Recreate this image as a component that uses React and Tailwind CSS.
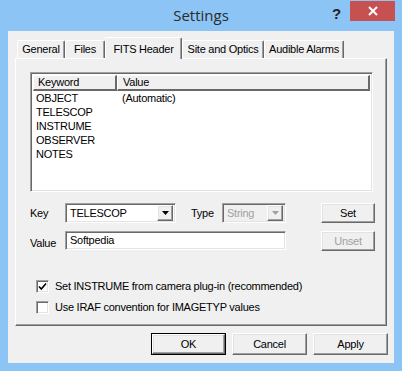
import React from "react";

const raised =
  "border border-t-white border-l-white border-r-[#696969] border-b-[#696969] shadow-[inset_-1px_-1px_0_#a0a0a0,inset_1px_1px_0_#e3e3e3]";
const sunken =
  "border border-t-[#a0a0a0] border-l-[#a0a0a0] border-r-white border-b-white shadow-[inset_1px_1px_0_#696969,inset_-1px_-1px_0_#e3e3e3]";

function Arrow({ color }) {
  return (
    <svg width="7" height="4" viewBox="0 0 7 4">
      <path d="M0 0H7L3.5 4Z" fill={color} />
    </svg>
  );
}

function Button({ children, disabled, def, className = "" }) {
  if (def) {
    return (
      <div className={"border border-black bg-[#f0f0f0] flex " + className}>
        <div className={"flex-1 flex items-center justify-center " + raised}>{children}</div>
      </div>
    );
  }
  return (
    <div
      className={
        "bg-[#f0f0f0] flex items-center justify-center " +
        raised +
        " " +
        (disabled ? "text-[#a0a0a0] " : "") +
        className
      }
    >
      {children}
    </div>
  );
}

function Checkbox({ checked, label }) {
  return (
    <div className="flex items-center h-[13px] ml-[6px]">
      <div className={"w-[13px] h-[13px] bg-white flex items-center justify-center " + sunken}>
        {checked && (
          <svg width="9" height="9" viewBox="0 0 9 9">
            <path d="M1 4.5L3.3 7L8 1.5" stroke="#000" strokeWidth="1.6" fill="none" />
          </svg>
        )}
      </div>
      <span className="ml-[6px] leading-[13px] whitespace-nowrap">{label}</span>
    </div>
  );
}

function Tab({ label, selected, w, className = "" }) {
  if (selected) {
    return (
      <div
        className={
          "relative z-10 shrink-0 h-[22px] -mb-px bg-[#f0f0f0] border-t border-l border-r border-t-white border-l-white border-r-[#696969] shadow-[inset_-1px_0_0_#a0a0a0] rounded-t-[2px] flex items-start justify-center pt-[3px] whitespace-nowrap overflow-hidden " +
          className
        }
        style={{ width: w }}
      >
        {label}
      </div>
    );
  }
  return (
    <div
      className={
        "shrink-0 h-[18px] bg-[#f0f0f0] border-t border-l border-r border-t-white border-l-white border-r-[#696969] shadow-[inset_-1px_0_0_#a0a0a0] rounded-t-[2px] flex items-center justify-center whitespace-nowrap overflow-hidden " +
        className
      }
      style={{ width: w }}
    >
      {label}
    </div>
  );
}

export default function App() {
  const rows = [
    ["OBJECT", "(Automatic)"],
    ["TELESCOP", ""],
    ["INSTRUME", ""],
    ["OBSERVER", ""],
    ["NOTES", ""],
  ];
  return (
    <div className="w-[402px] h-[371px] bg-[#8cc4f5] flex flex-col font-['Liberation_Sans',Arial,sans-serif] text-[11px] tracking-[-0.25px] text-black overflow-hidden">
      {/* Title bar */}
      <div className="relative h-[31px] shrink-0 flex items-center justify-center tracking-normal">
        <span className="font-['Open_Sans',sans-serif] text-[15px] text-[#2b2b2b] -mt-[1px]">Settings</span>
        <span className="absolute left-[332px] top-[3px] font-['Liberation_Sans',sans-serif] font-bold text-[15px] text-[#222]">
          ?
        </span>
        <div className="absolute left-[350px] top-[1px] w-[45px] h-[20px] bg-[#c75050] flex items-center justify-center">
          <svg width="10" height="10" viewBox="0 0 10 10">
            <path d="M1 1L9 9M9 1L1 9" stroke="#fff" strokeWidth="2" />
          </svg>
        </div>
      </div>

      {/* Client area */}
      <div className="mx-[8px] w-[386px] h-[332px] bg-[#f0f0f0] flex flex-col pt-[6px]">
        {/* Tabs */}
        <div className="flex items-end h-[21px] pl-[9px]">
          <Tab label="General" w={48} />
          <Tab label="Files" w={40} />
          <Tab label="FITS Header" w={77} selected />
          <Tab label="Site and Optics" w={82} />
          <Tab label="Audible Alarms" w={80} />
        </div>

        {/* Panel */}
        <div className="ml-[7px] w-[372px] h-[268px] border border-t-white border-l-white border-r-[#696969] border-b-[#696969] shadow-[inset_-1px_-1px_0_#a0a0a0] pl-[14px] pt-[13px] flex flex-col">
          {/* List view */}
          <div className={"w-[343px] h-[120px] bg-white flex flex-col p-[2px] " + sunken}>
            <div className="flex h-[16px] shrink-0">
              <div className="w-[84px] h-[16px] bg-[#f0f0f0] border-t border-l border-t-white border-l-white border-r-2 border-b-2 border-r-[#696969] border-b-[#696969] pl-[4px] flex items-center leading-none">
                Keyword
              </div>
              <div className="flex-1 h-[16px] bg-[#f0f0f0] border-t border-l border-t-white border-l-white border-r-2 border-b-2 border-r-[#696969] border-b-[#696969] pl-[5px] flex items-center leading-none">
                Value
              </div>
            </div>
            <div className="flex flex-col">
              {rows.map(([k, v]) => (
                <div key={k} className="flex h-[14px] items-center leading-[14px]">
                  <span className="w-[89px] pl-[3px] shrink-0 text-[#000]">{k}</span>
                  <span>{v}</span>
                </div>
              ))}
            </div>
          </div>

          {/* Key row */}
          <div className="flex items-center h-[20px] mt-[11px]">
            <span className="w-[35px] shrink-0">Key</span>
            <div className={"w-[111px] h-[20px] bg-white flex items-center p-[2px] " + sunken}>
              <span className="flex-1 pl-[2px] leading-none">TELESCOP</span>
              <div className={"w-[16px] h-[16px] bg-[#f0f0f0] flex items-center justify-center " + raised}>
                <Arrow color="#000" />
              </div>
            </div>
            <span className="w-[31px] ml-[15px] shrink-0">Type</span>
            <div className={"w-[64px] h-[20px] bg-[#f0f0f0] flex items-center p-[2px] " + sunken}>
              <span className="flex-1 pl-[2px] leading-none text-[#a0a0a0]">String</span>
              <div className={"w-[16px] h-[16px] bg-[#f0f0f0] flex items-center justify-center " + raised}>
                <Arrow color="#a0a0a0" />
              </div>
            </div>
            <Button className="w-[54px] h-[20px] ml-[35px]">Set</Button>
          </div>

          {/* Value row */}
          <div className="flex items-start h-[20px] mt-[8px]">
            <span className="w-[35px] shrink-0 mt-[4px]">Value</span>
            <div className={"w-[221px] h-[19px] bg-white flex items-center px-[4px] leading-none " + sunken}>
              Softpedia
            </div>
            <Button disabled className="w-[54px] h-[20px] ml-[35px]">
              Unset
            </Button>
          </div>

          {/* Checkboxes */}
          <div className="mt-[29px]">
            <Checkbox checked label="Set INSTRUME from camera plug-in (recommended)" />
          </div>
          <div className="mt-[8px]">
            <Checkbox label="Use IRAF convention for IMAGETYP values" />
          </div>
        </div>

        {/* Bottom buttons */}
        <div className="flex justify-end gap-[6px] pr-[6px] mt-[7px]">
          <Button def className="w-[75px] h-[22px]">
            OK
          </Button>
          <Button className="w-[75px] h-[22px]">Cancel</Button>
          <Button className="w-[75px] h-[22px]">Apply</Button>
        </div>
      </div>
    </div>
  );
}
